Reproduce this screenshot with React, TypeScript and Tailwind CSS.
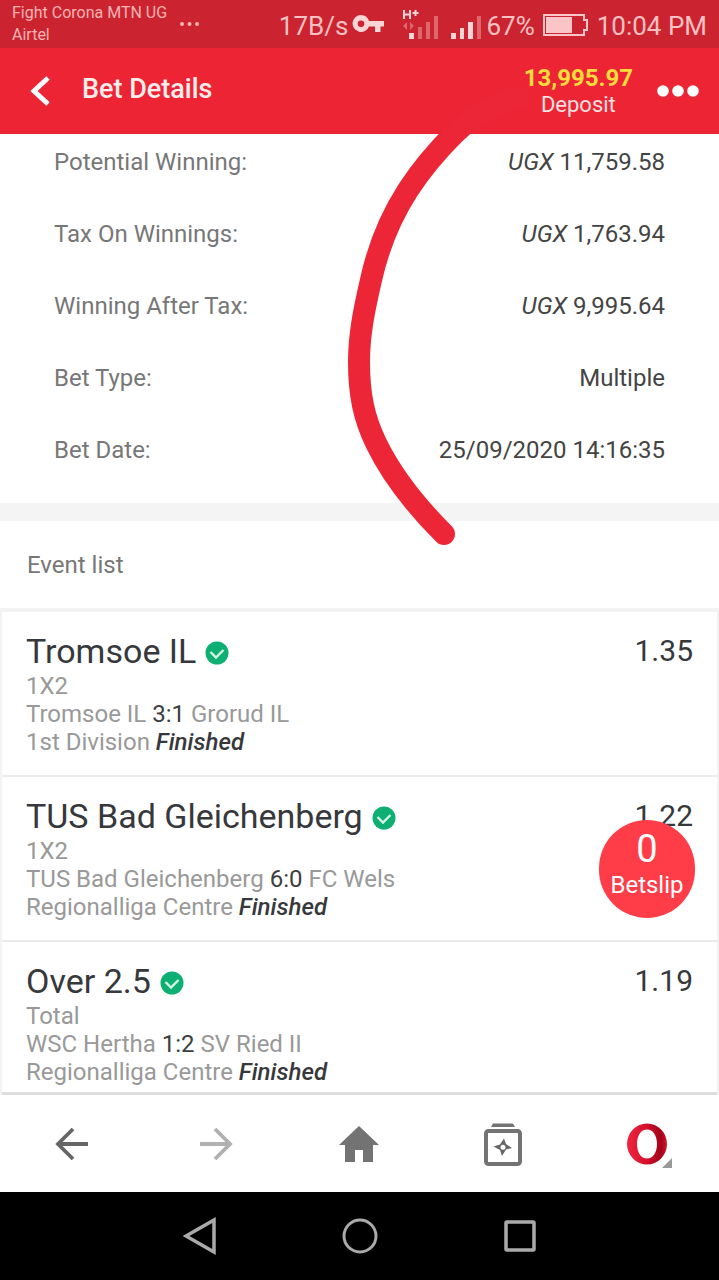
import React from "react";

const details = [
  { label: "Potential Winning:", currency: "UGX", value: "11,759.58" },
  { label: "Tax On Winnings:", currency: "UGX", value: "1,763.94" },
  { label: "Winning After Tax:", currency: "UGX", value: "9,995.64" },
  { label: "Bet Type:", value: "Multiple" },
  { label: "Bet Date:", value: "25/09/2020 14:16:35" },
];

const events = [
  { pick: "Tromsoe IL", odds: "1.35", market: "1X2", home: "Tromsoe IL", score: "3:1", away: "Grorud IL", league: "1st Division" },
  { pick: "TUS Bad Gleichenberg", odds: "1.22", market: "1X2", home: "TUS Bad Gleichenberg", score: "6:0", away: "FC Wels", league: "Regionalliga Centre" },
  { pick: "Over 2.5", odds: "1.19", market: "Total", home: "WSC Hertha", score: "1:2", away: "SV Ried II", league: "Regionalliga Centre" },
];

function StatusBar() {
  return (
    <div className="flex h-12 items-center bg-[#cb232f] px-3 text-[#fbb4b4]">
      <div className="w-[168px] text-[16px] leading-[22px]">
        <div className="whitespace-nowrap">Fight Corona MTN UG</div>
        <div>Airtel</div>
      </div>
      <svg width="20" height="6" viewBox="0 0 20 6" fill="currentColor" aria-hidden="true">
        <circle cx="2" cy="3" r="2" />
        <circle cx="9.5" cy="3" r="2" />
        <circle cx="17" cy="3" r="2" />
      </svg>
      <div className="ml-auto flex items-center pt-1 text-[26px] leading-8 text-[#fcc0c2]">
        <span>17B/s</span>
        <svg className="ml-1" width="34" height="24" viewBox="0 0 34 24" fill="#fbd5d5" aria-hidden="true">
          <path fillRule="evenodd" d="M9 1a8.500 8.500 0 1 0 8 11.500h6V18h5.500v-5.500H32V7H17A8.500 8.500 0 0 0 9 1Zm0 5.500a3.300 3.300 0 1 1 0 6.600 3.300 3.300 0 0 1 0-6.600Z" />
        </svg>
        <svg className="ml-4" width="37" height="32" viewBox="0 0 37 32" aria-hidden="true">
          <path d="M2 0v9M8 0v9M2 4.500h6M10.500 3h6M13.500 0v6" stroke="#fbd5d5" strokeWidth="2" fill="none" />
          <path d="M1 16l4-4v8zM12 16l-4-4v8z" fill="#e0666d" />
          <rect x="7" y="23" width="5" height="6" fill="#fbd5d5" />
          <path d="M16 17h4v12h-4zM24 12h4v17h-4zM32 6h4v23h-4z" fill="#e0666d" />
        </svg>
        <svg className="ml-3" width="31" height="32" viewBox="0 0 31 32" aria-hidden="true">
          <path d="M0 23h5v6H0zM9 18h4v11H9zM17 12h5v17h-5z" fill="#fbd5d5" />
          <path d="M26 6h4v23h-4z" fill="#e0666d" />
        </svg>
        <span className="ml-1">67%</span>
        <svg className="ml-2" width="46" height="24" viewBox="0 0 46 24" aria-hidden="true">
          <path d="M1 1h40v5h3v10h-3v5H1z" fill="none" stroke="#fbc5c7" strokeWidth="2" />
          <path d="M3 3h26v16H3z" fill="#fbc5c7" />
        </svg>
        <span className="ml-2">10:04 PM</span>
      </div>
    </div>
  );
}

function Header() {
  return (
    <header className="flex h-[86px] items-center bg-[#ec2434] pl-[30px] pr-5 text-white">
      <button aria-label="Back" className="block">
        <svg width="20" height="32" viewBox="0 0 20 32" fill="none" stroke="white" strokeWidth="5">
          <path d="M18 3 4 16l14 13" />
        </svg>
      </button>
      <h1 className="ml-8 pb-1 text-[27px] font-medium leading-8 text-[#fdecec]">Bet Details</h1>
      <a href="#deposit" className="ml-auto flex flex-col items-center">
        <span className="text-[24px] font-bold leading-7 text-[#fbdc3c]">13,995.97</span>
        <span className="text-[22px] leading-[26px] text-[#fde0e0]">Deposit</span>
      </a>
      <button aria-label="More" className="ml-6 block">
        <svg width="42" height="12" viewBox="0 0 42 12" fill="white">
          <circle cx="6" cy="6" r="5.800" />
          <circle cx="21" cy="6" r="5.800" />
          <circle cx="36" cy="6" r="5.800" />
        </svg>
      </button>
    </header>
  );
}

function CheckIcon() {
  return (
    <svg width="24" height="24" viewBox="0 0 24 24" className="mt-1" aria-label="Won" role="img">
      <circle cx="12" cy="12" r="11.500" fill="#0eaf72" />
      <path d="m5.500 11 5.500 5.500 7.500-7.500" fill="none" stroke="#d5f5e6" strokeWidth="2.400" />
    </svg>
  );
}

function BrowserBar() {
  return (
    <nav className="grid h-24 shrink-0 grid-cols-5 items-center justify-items-center bg-white">
      <button aria-label="Previous page">
        <svg width="34" height="34" viewBox="0 0 34 34" fill="none" stroke="#666" strokeWidth="3.800">
          <path d="M33 17H3M18 2 3 17l15 15" />
        </svg>
      </button>
      <button aria-label="Next page">
        <svg width="34" height="34" viewBox="0 0 34 34" fill="none" stroke="#b0b0b0" strokeWidth="3.800">
          <path d="M1 17h30M16 2l15 15-15 15" />
        </svg>
      </button>
      <button aria-label="Home">
        <svg width="40" height="36" viewBox="0 0 40 36" fill="#737373">
          <path d="M20 0 0 19h6v17h10V24h8v12h10V19h6Z" />
        </svg>
      </button>
      <button aria-label="Tabs">
        <svg width="38" height="44" viewBox="0 0 38 44">
          <path d="M7 5 9 1.500h20L31 5Z" fill="#737373" />
          <rect x="2" y="9" width="34" height="33" rx="2.500" fill="none" stroke="#737373" strokeWidth="4" />
          <path fillRule="evenodd" d="m20 16.500 2 5.500 6 4-6 1.500-4 6.500-2-6-6.500-3.500 6.500-2ZM19 22.700a2.500 2.500 0 1 0 0 5 2.500 2.500 0 0 0 0-5Z" fill="#666" />
        </svg>
      </button>
      <button aria-label="Opera menu">
        <svg width="50" height="48" viewBox="0 0 50 48">
          <defs>
            <linearGradient id="operaRing" x1="0" x2="1" y1="0" y2="0">
              <stop offset="0" stopColor="#f0233f" />
              <stop offset="0.500" stopColor="#d3112b" />
              <stop offset="0.850" stopColor="#a30018" />
              <stop offset="1" stopColor="#cf1830" />
            </linearGradient>
          </defs>
          <path fillRule="evenodd" fill="url(#operaRing)" d="M25 3.500a20 20.500 0 1 1 0 41 20 20.500 0 0 1 0-41Zm0 6c-6 0-10 6-10 14.500S19 38.500 25 38.500s10-6 10-14.500S31 9.500 25 9.500Z" />
          <path d="M50 38v10H40Z" fill="#999" />
        </svg>
      </button>
    </nav>
  );
}

function SystemBar() {
  return (
    <nav className="grid h-[88px] shrink-0 grid-cols-[1fr_160px_160px_160px_1fr] items-center justify-items-center bg-black">
      <button aria-label="System back" className="col-start-2">
        <svg width="34" height="38" viewBox="0 0 34 38" fill="none" stroke="#aaa" strokeWidth="3.500">
          <path d="M31 3v32L3 19Z" />
        </svg>
      </button>
      <button aria-label="System home">
        <svg width="36" height="36" viewBox="0 0 36 36" fill="none" stroke="#aaa" strokeWidth="3">
          <circle cx="18" cy="18" r="16" />
        </svg>
      </button>
      <button aria-label="Recent apps">
        <svg width="34" height="34" viewBox="0 0 34 34" fill="none" stroke="#aaa" strokeWidth="3.500">
          <rect x="3" y="3" width="28" height="28" rx="1" />
        </svg>
      </button>
    </nav>
  );
}

export default function App() {
  return (
    <div className="relative flex min-h-screen flex-col bg-white font-['Roboto',sans-serif]">
      <StatusBar />
      <Header />
      <main className="relative flex-1">
        <dl className="flex flex-col gap-10 px-[54px] pb-[37px] pt-3 text-[24px] leading-8">
          {details.map((d) => (
            <div key={d.label} className="flex justify-between">
              <dt className="text-[#777]">{d.label}</dt>
              <dd className="text-[#444]">
                {d.currency && <em>{d.currency} </em>}
                {d.value}
              </dd>
            </div>
          ))}
        </dl>
        <div className="h-[18px] bg-[#f4f4f4]" />
        <h2 className="flex h-[87px] items-center pl-[27px] text-[24px] leading-7 text-[#777]">Event list</h2>
        <ul className="border-x-2 border-t-4 border-[#f3f3f3]">
          {events.map((e, i) => (
            <li
              key={e.pick}
              className={
                i < events.length - 1
                  ? "h-[165px] border-b-2 border-[#ebebeb] px-6 pt-[18px]"
                  : "h-[153px] border-b-3 border-[#dedede] px-6 pt-[18px]"
              }
            >
              <div className="flex h-[42px] items-center text-[34px] leading-[42px] text-[#36383c]">
                <h3 className="mr-[9px]">{e.pick}</h3>
                <CheckIcon />
                <span className="ml-auto text-[30px]">{e.odds}</span>
              </div>
              <div className="text-[24px] leading-7 text-[#999]">
                <p>{e.market}</p>
                <p>
                  {e.home} <span className="text-[#3c3e42]">{e.score}</span> {e.away}
                </p>
                <p>
                  {e.league} <em className="font-medium text-[#36383c]">Finished</em>
                </p>
              </div>
            </li>
          ))}
        </ul>
        <button className="absolute bottom-[178px] right-6 flex h-[98px] w-24 flex-col items-center rounded-full bg-[#fe3d48] pt-[9px] text-white">
          <span className="text-[38px] leading-10">0</span>
          <span className="text-[24px] leading-8">Betslip</span>
        </button>
      </main>
      <BrowserBar />
      <SystemBar />
      <svg className="pointer-events-none absolute left-[340px] top-[80px]" width="200" height="480" viewBox="340 80 200 480" fill="none" stroke="#ec2637" strokeWidth="22" strokeLinecap="round" aria-hidden="true">
        <path d="M520 97C490 104 470 118 454 134C436 152 421 170 408 190C390 218 378 248 371 280C364 310 359 335 359 362C359 395 364 418 376 443C392 476 417 507 444 534" />
      </svg>
    </div>
  );
}
